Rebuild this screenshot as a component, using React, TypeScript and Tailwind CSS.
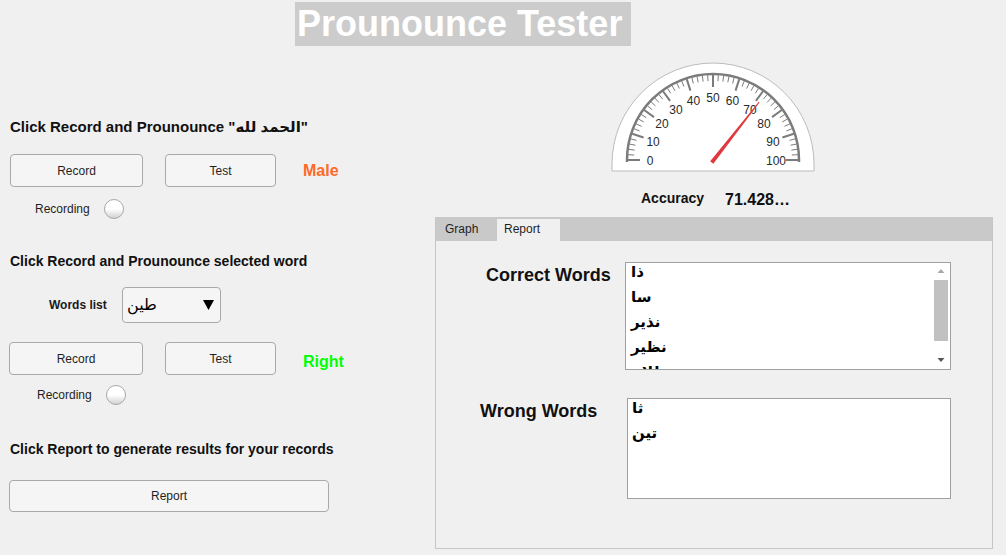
import React from "react";

function Btn({ w, h, label }: { w: string; h: string; label: string }) {
  return (
    <div
      className={`${w} ${h} flex items-center justify-center rounded-[4px] border border-[#a9a9a9] bg-[#f5f5f5] text-[12px] text-[#1f1f1f]`}
    >
      {label}
    </div>
  );
}

function Lamp() {
  return (
    <div className="h-[20px] w-[20px] rounded-full border border-[#a8a8a8] bg-linear-to-b from-white from-50% to-[#d2d2d2]" />
  );
}

function Gauge() {
  const cx = 103;
  const cy = 99;
  const ticks: React.ReactNode[] = [];
  for (let v = 0; v <= 100; v += 2) {
    const major = v % 10 === 0;
    const a = Math.PI - (v / 100) * Math.PI;
    const r1 = 85;
    const r2 = major ? 73 : 79;
    ticks.push(
      <line
        key={v}
        x1={cx + r1 * Math.cos(a)}
        y1={cy - r1 * Math.sin(a)}
        x2={cx + r2 * Math.cos(a)}
        y2={cy - r2 * Math.sin(a)}
        stroke="#7b7b7b"
        strokeWidth={major ? 2 : 1}
      />
    );
  }
  const labels: React.ReactNode[] = [];
  for (let v = 0; v <= 100; v += 10) {
    const a = Math.PI - (v / 100) * Math.PI;
    const r = 63;
    labels.push(
      <text
        key={v}
        x={cx + r * Math.cos(a)}
        y={cy - r * Math.sin(a) + 1}
        textAnchor="middle"
        dominantBaseline="central"
        fontSize={12}
        fill="#2a2a2a"
        fontFamily="Liberation Sans, Arial, sans-serif"
      >
        {v}
      </text>
    );
  }
  const val = 71.428;
  const ang = Math.PI - (val / 100) * Math.PI;
  const dx = Math.cos(ang);
  const dy = -Math.sin(ang);
  const px = -dy;
  const py = dx;
  const bx = cx - 2 * dx;
  const by = cy + 1 - 2 * dy;
  const tx = cx + 74 * dx;
  const ty = cy + 74 * dy;
  const pts = [
    [bx + 2 * px, by + 2 * py],
    [tx + 0.5 * px, ty + 0.5 * py],
    [tx - 0.5 * px, ty - 0.5 * py],
    [bx - 2 * px, by - 2 * py],
  ]
    .map((p) => p.join(","))
    .join(" ");
  return (
    <svg width={206} height={111} viewBox="0 0 206 111">
      <path
        d="M 2 103 A 101 101 0 0 1 204 103 L 204 110 L 2 110 Z"
        fill="#ffffff"
        stroke="#bcbcbc"
        strokeWidth={1}
      />
      <path
        d={`M ${cx - 86} ${cy + 2} L ${cx - 86} ${cy} A 86 86 0 0 1 ${cx + 86} ${cy} L ${cx + 86} ${cy + 2}`}
        fill="none"
        stroke="#7b7b7b"
        strokeWidth={2.5}
      />
      {ticks}
      {labels}
      <polygon points={pts} fill="#e0383c" />
    </svg>
  );
}

function ScrollBar() {
  return (
    <svg width={16} height={106} viewBox="0 0 16 106" className="mr-[1px] shrink-0">
      <polygon points="4.5,10 11.5,10 8,6" fill="#a8a8a8" />
      <rect x={1} y={17} width={14} height={61} fill="#c1c1c1" />
      <polygon points="4.5,95 11.5,95 8,99" fill="#555555" />
    </svg>
  );
}

const arabic = "font-['DejaVu_Sans',sans-serif]";

export default function App() {
  const correct = ["ذا", "سا", "نذير", "نظير", "ظلام"];
  const wrong = ["ثا", "تين"];
  return (
    <div className="h-[555px] w-[1006px] overflow-hidden bg-[#f0f0f0] font-['Liberation_Sans','DejaVu_Sans',sans-serif] text-black">
      <div className="pl-[295px] pt-[2px]">
        <div className="h-[44px] w-[336px] bg-[#cccccc] pl-[2px] text-[36px] font-bold leading-[44px] text-white">
          Prounounce Tester
        </div>
      </div>

      <div className="flex">
        {/* left column */}
        <div className="flex w-[434px] shrink-0 flex-col">
          <div className="mt-[72px] pl-[10px] text-[15px] font-bold leading-[17px] text-[#111]">
            Click Record and Prounounce "الحمد لله"
          </div>
          <div className="mt-[19px] flex items-center pl-[10px]">
            <Btn w="w-[133px]" h="h-[33px]" label="Record" />
            <div className="ml-[22px]">
              <Btn w="w-[111px]" h="h-[33px]" label="Test" />
            </div>
            <div className="ml-[27px] mt-[1px] text-[16px] font-bold text-[#ff6929]">Male</div>
          </div>
          <div className="mt-[12px] flex h-[20px] items-center pl-[35px]">
            <span className="w-[69px] text-[12px] text-[#1f1f1f]">Recording</span>
            <Lamp />
          </div>

          <div className="mt-[34px] pl-[10px] text-[14px] font-bold leading-[16px] text-[#111]">
            Click Record and Prounounce selected word
          </div>
          <div className="mt-[18px] flex items-center pl-[49px]">
            <span className="w-[73px] text-[12px] font-bold text-[#1a1a1a]">Words list</span>
            <div className="flex h-[36px] w-[99px] items-center justify-between rounded-[4px] border border-[#a9a9a9] bg-[#f5f5f5] pl-[4px] pr-[6px]">
              <span className={`${arabic} text-[16px] text-black`}>طين</span>
              <svg width={11} height={10} viewBox="0 0 11 10">
                <polygon points="0,0 11,0 5.5,10" fill="#000" />
              </svg>
            </div>
          </div>
          <div className="mt-[19px] flex items-center pl-[9px]">
            <Btn w="w-[134px]" h="h-[33px]" label="Record" />
            <div className="ml-[22px]">
              <Btn w="w-[111px]" h="h-[33px]" label="Test" />
            </div>
            <div className="ml-[27px] mt-[6px] text-[16px] font-bold text-[#00ff00]">Right</div>
          </div>
          <div className="mt-[10px] flex h-[20px] items-center pl-[37px]">
            <span className="w-[69px] text-[12px] text-[#1f1f1f]">Recording</span>
            <Lamp />
          </div>

          <div className="mt-[36px] pl-[10px] text-[14px] font-bold leading-[16px] text-[#111]">
            Click Report to generate results for your records
          </div>
          <div className="ml-[9px] mt-[23px]">
            <Btn w="w-[320px]" h="h-[32px]" label="Report" />
          </div>
        </div>

        {/* right column */}
        <div className="flex flex-col">
          <div className="ml-[176px] mt-[15px]">
            <Gauge />
          </div>
          <div className="mt-[18px] flex items-start pl-[207px]">
            <span className="w-[84px] text-[14px] font-bold leading-[16px] text-[#111]">Accuracy</span>
            <span className="text-[16px] font-bold leading-[20px] text-[#111]">71.428…</span>
          </div>

          <div className="ml-[1px] mt-[7px] flex h-[332px] w-[558px] flex-col border-x border-b border-[#c6c6c6]">
            <div className="flex h-[24px] shrink-0 bg-[#c9c9c9] text-[12px] text-[#1f1f1f]">
              <div className="w-[61px] pl-[9px] leading-[24px]">Graph</div>
              <div className="mt-[2px] w-[63px] bg-[#f0f0f0] pl-[7px] leading-[20px]">Report</div>
            </div>
            <div className="flex flex-col">
              <div className="mt-[21px] flex">
                <div className="mt-[3px] w-[189px] pl-[50px] text-[18px] font-bold leading-[20px] text-[#111]">
                  Correct Words
                </div>
                <div className="flex h-[108px] w-[326px] overflow-hidden border border-[#a0a0a0] bg-white">
                  <div className="flex-1 pl-[5px]">
                    {correct.map((w) => (
                      <div key={w} className={`${arabic} h-[25px] text-[15px] font-bold leading-[19px] text-black`}>
                        {w}
                      </div>
                    ))}
                  </div>
                  <ScrollBar />
                </div>
              </div>
              <div className="mt-[28px] flex">
                <div className="mt-[3px] w-[191px] pl-[44px] text-[18px] font-bold leading-[20px] text-[#111]">
                  Wrong Words
                </div>
                <div className="h-[101px] w-[324px] overflow-hidden border border-[#a0a0a0] bg-white pl-[4px]">
                  {wrong.map((w) => (
                    <div key={w} className={`${arabic} h-[25px] text-[15px] font-bold leading-[19px] text-black`}>
                      {w}
                    </div>
                  ))}
                </div>
              </div>
            </div>
          </div>
        </div>
      </div>
    </div>
  );
}
